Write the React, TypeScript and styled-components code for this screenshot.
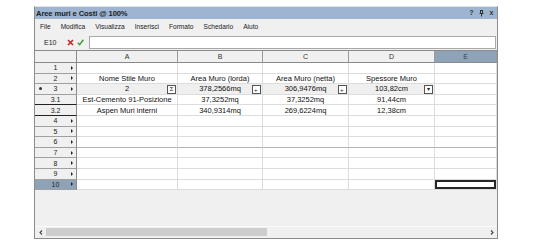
import React from "react";
import styled, { createGlobalStyle } from "styled-components";

const GlobalStyle = createGlobalStyle`
  html, body {
    margin: 0;
    padding: 0;
    background: #ffffff;
    font-family: "Liberation Sans", Arial, sans-serif;
  }
`;

const Window = styled.div`
  box-sizing: border-box;
  margin: 6px 0 0 34px;
  width: 464px;
  height: 233px;
  border: 1px solid #8c8c8c;
  border-top-color: #e4e4e4;
  background: #f0f0f0;
  display: flex;
  flex-direction: column;
  overflow: hidden;
`;

const TitleBar = styled.div`
  height: 12px;
  background: #9db5d1;
  display: flex;
  align-items: center;
  justify-content: space-between;
  padding: 0 3px 0 1px;
`;

const Title = styled.span`
  font-size: 7.6px;
  font-weight: bold;
  color: #1c1c1c;
  letter-spacing: -0.1px;
`;

const TitleButtons = styled.div`
  display: flex;
  align-items: center;
  gap: 5px;
`;

const TitleButton = styled.span`
  font-size: 7px;
  font-weight: bold;
  color: #333;
  width: 5px;
  text-align: center;
  line-height: 8px;
`;

const MenuBar = styled.div`
  height: 15px;
  display: flex;
  align-items: center;
  gap: 10px;
  padding-left: 5px;
  background: #f0f0f0;
`;

const MenuItem = styled.span`
  font-size: 6.6px;
  color: #222;
`;

const FormulaBar = styled.div`
  height: 16px;
  display: flex;
  align-items: center;
  padding-right: 1px;
`;

const CellRef = styled.span`
  width: 30px;
  padding-left: 9px;
  box-sizing: border-box;
  font-size: 7px;
  color: #222;
`;

const FormulaIcons = styled.div`
  display: flex;
  align-items: center;
  gap: 3px;
  width: 22px;
  padding-left: 2px;
`;

const FormulaInput = styled.div`
  flex: 1;
  height: 11px;
  background: #fff;
  border: 1px solid #a8a8a8;
`;

const Sheet = styled.div`
  display: grid;
  grid-template-columns: 42px 101px 85px 86px 86px 1fr;
  grid-template-rows: 12px repeat(12, 10.6px);
  border-top: 1px solid #8a8a8a;
  background: #fff;
`;

const Corner = styled.div`
  box-sizing: border-box;
  background: #f0f0f0;
  border-right: 1px solid #8a8a8a;
  border-bottom: 1px solid #8a8a8a;
`;

const ColHeader = styled.div<{ $active?: boolean }>`
  box-sizing: border-box;
  display: flex;
  align-items: center;
  justify-content: center;
  font-size: 7px;
  color: ${(p) => (p.$active ? "#3a4550" : "#333")};
  background: ${(p) => (p.$active ? "#8ea3b7" : "#f0f0f0")};
  border-right: 1px solid #9a9a9a;
  border-bottom: 1px solid #8a8a8a;
`;

const RowHeader = styled.div<{ $active?: boolean; $dark?: boolean }>`
  box-sizing: border-box;
  position: relative;
  display: flex;
  align-items: center;
  justify-content: center;
  font-size: 7px;
  color: #222;
  background: ${(p) => (p.$active ? "#8ea3b7" : "#f0f0f0")};
  border-right: 1px solid #8a8a8a;
  border-bottom: 1px solid ${(p) => (p.$dark ? "#222" : "#a0a0a0")};
`;

const RowArrow = styled.span`
  position: absolute;
  right: 3px;
  top: 50%;
  margin-top: -2px;
  width: 0;
  height: 0;
  border-top: 2px solid transparent;
  border-bottom: 2px solid transparent;
  border-left: 2px solid #222;
`;

const RowMarker = styled.span`
  position: absolute;
  left: 4px;
  top: 50%;
  margin-top: -1.5px;
  width: 3px;
  height: 3px;
  border-radius: 50%;
  background: #333;
`;

const Cell = styled.div<{ $summary?: boolean; $divider?: boolean; $selected?: boolean }>`
  box-sizing: border-box;
  position: relative;
  display: flex;
  align-items: center;
  justify-content: center;
  white-space: nowrap;
  font-size: 7.5px;
  color: #111;
  background: ${(p) => (p.$summary ? "#efefef" : "#fff")};
  border-right: 1px solid #dcdcdc;
  border-bottom: 1px solid ${(p) => (p.$divider ? "#b4b4b4" : "#dcdcdc")};
  box-shadow: ${(p) => (p.$selected ? "inset 0 0 0 2px #262626" : "none")};
`;

const SummaryBox = styled.span<{ $corner?: boolean }>`
  position: absolute;
  right: 1px;
  top: 1px;
  box-sizing: border-box;
  width: 9px;
  height: 8.5px;
  background: #fff;
  border: 1px solid #555;
  display: flex;
  align-items: ${(p) => (p.$corner ? "flex-end" : "center")};
  justify-content: ${(p) => (p.$corner ? "flex-start" : "center")};
  padding-left: ${(p) => (p.$corner ? "1px" : "0")};
  font-size: 6px;
  line-height: 6px;
  color: #222;
`;

const Filler = styled.div`
  flex: 1;
  background: #f0f0f0;
  border-bottom: 1px solid #fafafa;
`;

const HScroll = styled.div`
  height: 10px;
  display: flex;
  align-items: center;
  padding: 0 3px 0 4px;
  gap: 3px;
  margin-bottom: 1px;
`;

const ScrollTrack = styled.div`
  flex: 1;
  height: 8px;
  display: flex;
`;

const ScrollThumb = styled.div`
  width: 221px;
  height: 8px;
  background: #cdcdcd;
`;

const Chevron = ({ dir }: { dir: "left" | "right" }) => (
  <svg width="4" height="5" viewBox="0 0 4 5">
    <path
      d={dir === "left" ? "M3 0.5 L1 2.5 L3 4.5" : "M1 0.5 L3 2.5 L1 4.5"}
      stroke="#444"
      strokeWidth="1.1"
      fill="none"
    />
  </svg>
);

const CrossIcon = () => (
  <svg width="7" height="7" viewBox="0 0 7 7">
    <path d="M1 1 L6 6 M6 1 L1 6" stroke="#d02020" strokeWidth="1.6" />
  </svg>
);

const CheckIcon = () => (
  <svg width="7" height="7" viewBox="0 0 7 7">
    <path d="M0.8 3.6 L2.6 5.6 L6.4 0.8" stroke="#3d9a2c" strokeWidth="1.4" fill="none" />
  </svg>
);

const PinIcon = () => (
  <svg width="5" height="7" viewBox="0 0 5 7">
    <path d="M1 0.5 H4 M1.5 0.5 V3.5 M3.5 0.5 V3.5 M0.5 3.5 H4.5 M2.5 3.5 V6.5" stroke="#333" strokeWidth="1" fill="none" />
  </svg>
);

type Row = {
  label: string;
  arrow?: boolean;
  marker?: boolean;
  summary?: boolean;
  dark?: boolean;
  divider?: boolean;
  cells?: string[];
  boxes?: { glyph: string; corner?: boolean }[];
};

const rows: Row[] = [
  { label: "1", arrow: true },
  {
    label: "2",
    arrow: true,
    cells: ["Nome Stile Muro", "Area Muro (lorda)", "Area Muro (netta)", "Spessore Muro"],
  },
  {
    label: "3",
    arrow: true,
    marker: true,
    summary: true,
    cells: ["2", "378,2566mq", "306,9476mq", "103,82cm"],
    boxes: [{ glyph: "Σ" }, { glyph: "+", corner: true }, { glyph: "+", corner: true }, { glyph: "▾" }],
  },
  {
    label: "3.1",
    dark: true,
    cells: ["Est-Cemento 91-Posizione", "37,3252mq", "37,3252mq", "91,44cm"],
  },
  {
    label: "3.2",
    dark: true,
    cells: ["Aspen Muri interni", "340,9314mq", "269,6224mq", "12,38cm"],
  },
  { label: "4", arrow: true },
  { label: "5", arrow: true },
  { label: "6", arrow: true, divider: true },
  { label: "7", arrow: true },
  { label: "8", arrow: true },
  { label: "9", arrow: true },
  { label: "10", arrow: true },
];

const columns = ["A", "B", "C", "D", "E"];
const menus = ["File", "Modifica", "Visualizza", "Inserisci", "Formato", "Schedario", "Aiuto"];

export default function App() {
  return (
    <>
      <GlobalStyle />
      <Window>
        <TitleBar>
          <Title>Aree muri e Costi @ 100%</Title>
          <TitleButtons>
            <TitleButton>?</TitleButton>
            <PinIcon />
            <TitleButton>x</TitleButton>
          </TitleButtons>
        </TitleBar>
        <MenuBar>
          {menus.map((m) => (
            <MenuItem key={m}>{m}</MenuItem>
          ))}
        </MenuBar>
        <FormulaBar>
          <CellRef>E10</CellRef>
          <FormulaIcons>
            <CrossIcon />
            <CheckIcon />
          </FormulaIcons>
          <FormulaInput />
        </FormulaBar>
        <Sheet>
          <Corner />
          {columns.map((c) => (
            <ColHeader key={c} $active={c === "E"}>
              {c}
            </ColHeader>
          ))}
          {rows.map((r) => (
            <React.Fragment key={r.label}>
              <RowHeader $active={r.label === "10"} $dark={r.dark}>
                {r.marker && <RowMarker />}
                {r.label}
                {r.arrow && <RowArrow />}
              </RowHeader>
              {columns.map((c, i) => (
                <Cell
                  key={c}
                  $summary={r.summary && c !== "E"}
                  $divider={r.divider}
                  $selected={r.label === "10" && c === "E"}
                >
                  {r.cells?.[i]}
                  {r.boxes?.[i] && (
                    <SummaryBox $corner={r.boxes[i].corner}>{r.boxes[i].glyph}</SummaryBox>
                  )}
                </Cell>
              ))}
            </React.Fragment>
          ))}
        </Sheet>
        <Filler />
        <HScroll>
          <Chevron dir="left" />
          <ScrollTrack>
            <ScrollThumb />
          </ScrollTrack>
          <Chevron dir="right" />
        </HScroll>
      </Window>
    </>
  );
}
